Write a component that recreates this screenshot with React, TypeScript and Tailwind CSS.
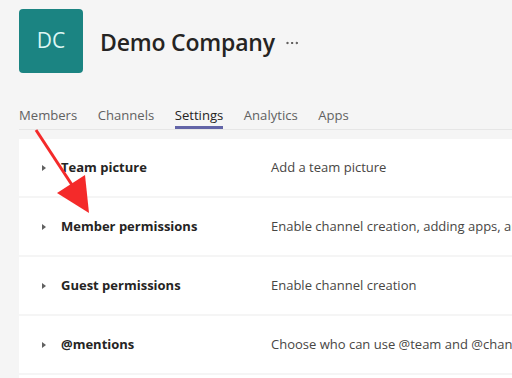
import { MoreHorizontal } from 'lucide-react';

const tabs = ['Members', 'Channels', 'Settings', 'Analytics', 'Apps'];

const rows = [
  { title: 'Team picture', desc: 'Add a team picture' },
  { title: 'Member permissions', desc: 'Enable channel creation, adding apps, and more' },
  { title: 'Guest permissions', desc: 'Enable channel creation' },
  { title: '@mentions', desc: 'Choose who can use @team and @channel mentions' },
];

const App = () => {
  return (
    <div className="relative w-[512px] h-[378px] overflow-hidden bg-[#f5f5f5] font-['Open_Sans',sans-serif] text-[#252423]">
      {/* Header */}
      <div className="flex items-center pt-[9px] pl-[19px]">
        <div className="w-[64px] h-[64px] rounded-[4px] bg-[#1b8482] flex items-center justify-center text-[21px] text-[#dcf6f3]">
          DC
        </div>
        <h1 className="ml-[17px] mt-[2px] text-[23px] font-semibold tracking-[-0.2px] text-[#252423]">Demo Company</h1>
        <MoreHorizontal className="ml-[9px] mt-[3px] h-4 w-4 text-[#484644]" strokeWidth={1.5} />
      </div>

      {/* Tabs */}
      <div className="ml-[19px] mt-[32px] flex gap-[20.5px] border-b border-[#e6e6e6]">
        {tabs.map((t) => (
          <div
            key={t}
            className={
              t === 'Settings'
                ? 'border-b-[3px] border-[#6264a7] text-[13.1px] text-[#252423] leading-[21px]'
                : 'border-b-[3px] border-transparent text-[13.1px] text-[#616161] leading-[21px]'
            }
          >
            {t}
          </div>
        ))}
      </div>

      {/* Settings rows */}
      <div className="ml-[19px] mt-[9px] flex flex-col gap-[2px]">
        {rows.map((r) => (
          <div key={r.title} className="h-[57px] bg-white flex items-center whitespace-nowrap">
            <svg className="ml-[23px] shrink-0 w-[4px] h-[6px] text-[#616161]" viewBox="0 0 4 6">
              <path d="M0 0 L4 3 L0 6 Z" fill="currentColor" />
            </svg>
            <div className="ml-[15px] w-[210px] shrink-0 text-[13px] font-bold text-[#252423]">{r.title}</div>
            <div className="text-[13px] text-[#484644]">{r.desc}</div>
          </div>
        ))}
        <div className="h-[57px] bg-white" />
      </div>

      {/* Red annotation arrow */}
      <svg className="absolute left-0 top-0 pointer-events-none" width="512" height="378">
        <line x1="36" y1="130" x2="74" y2="188" stroke="#f42a2a" strokeWidth="3" />
        <polygon points="57,193 85,175 89,213" fill="#f42a2a" />
      </svg>
    </div>
  );
};

export default App;
